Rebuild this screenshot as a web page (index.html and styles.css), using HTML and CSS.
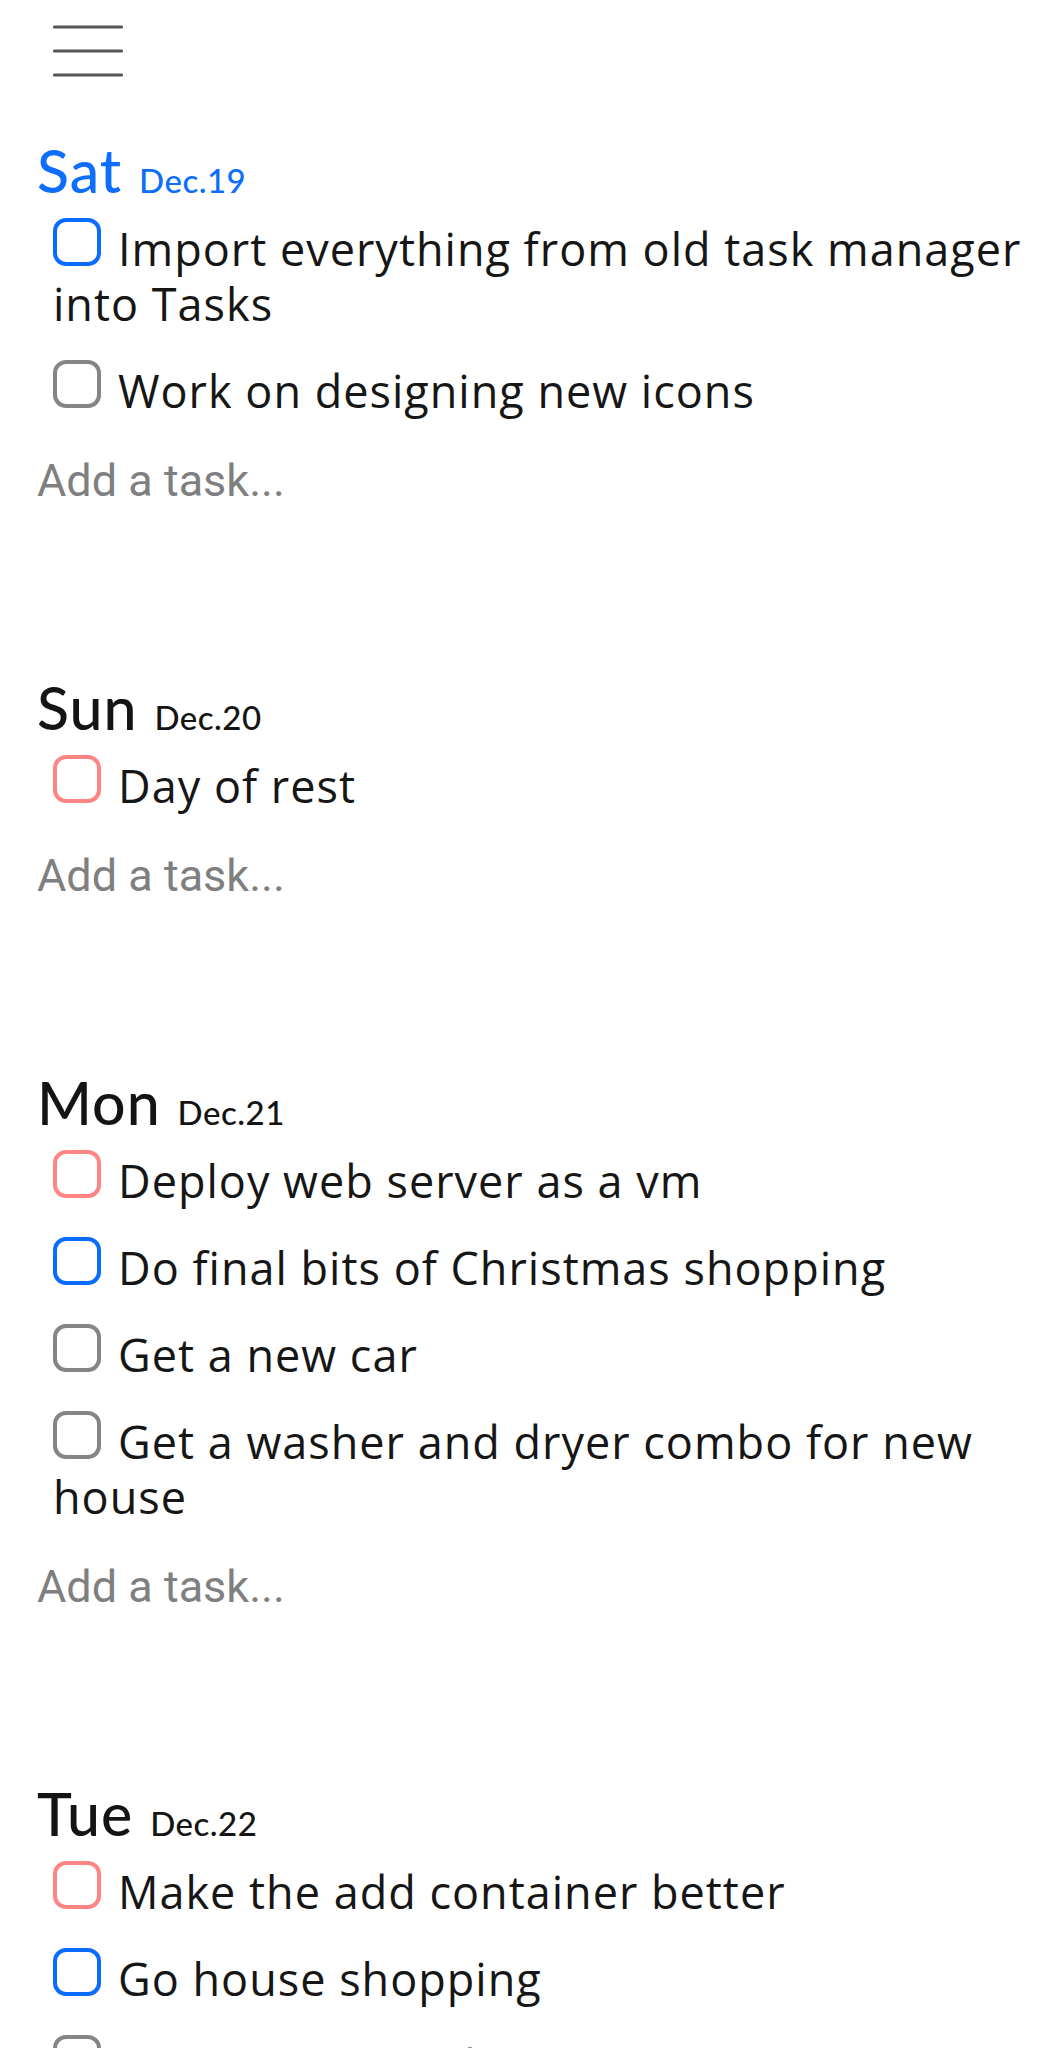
FILE: index.html
```html
<!DOCTYPE html>
<html lang="en">
<head>
<meta charset="utf-8">
<title>Tasks</title>
<link rel="stylesheet" href="styles.css">
</head>
<body>
<header class="topbar">
  <button class="menu-btn" aria-label="Menu">
    <svg width="70" height="54" viewBox="0 0 70 54" class="menu-icon">
      <line x1="1.5" y1="3" x2="68.5" y2="3"/>
      <line x1="1.5" y1="27" x2="68.5" y2="27"/>
      <line x1="1.5" y1="51" x2="68.5" y2="51"/>
    </svg>
  </button>
</header>
<main class="days">
  <section class="day today">
    <h2 class="day-title"><span class="dow">Sat</span> <span class="date">Dec.19</span></h2>
    <ul class="tasks">
      <li class="task"><span class="box box-blue"></span>Import everything from old task manager into Tasks</li>
      <li class="task"><span class="box box-gray"></span>Work on designing new icons</li>
    </ul>
    <div class="add">Add a task...</div>
  </section>
  <section class="day">
    <h2 class="day-title"><span class="dow">Sun</span> <span class="date">Dec.20</span></h2>
    <ul class="tasks">
      <li class="task"><span class="box box-red"></span>Day of rest</li>
    </ul>
    <div class="add">Add a task...</div>
  </section>
  <section class="day">
    <h2 class="day-title"><span class="dow">Mon</span> <span class="date">Dec.21</span></h2>
    <ul class="tasks">
      <li class="task"><span class="box box-red"></span>Deploy web server as a vm</li>
      <li class="task"><span class="box box-blue"></span>Do final bits of Christmas shopping</li>
      <li class="task"><span class="box box-gray"></span>Get a new car</li>
      <li class="task"><span class="box box-gray"></span>Get a washer and dryer combo for new house</li>
    </ul>
    <div class="add">Add a task...</div>
  </section>
  <section class="day">
    <h2 class="day-title"><span class="dow">Tue</span> <span class="date">Dec.22</span></h2>
    <ul class="tasks">
      <li class="task"><span class="box box-red"></span>Make the add container better</li>
      <li class="task"><span class="box box-blue"></span>Go house shopping</li>
      <li class="task"><span class="box box-gray"></span>Clean up the old kitchen</li>
    </ul>
    <div class="add">Add a task...</div>
  </section>
</main>
</body>
</html>
```
FILE: styles.css
```css
html, body {
  margin: 0;
  padding: 0;
  background: #ffffff;
}
body {
  font-family: "Open Sans", "Noto Sans", sans-serif;
  color: #161616;
}
.topbar {
  padding: 24px 0 0 53px;
  height: 139px;
  box-sizing: border-box;
}
.menu-btn {
  border: 0;
  background: none;
  padding: 0;
  margin: 0;
  display: block;
}
.menu-icon {
  display: block;
  stroke: #555555;
  stroke-width: 3.2;
  stroke-linecap: round;
}
.days {
  padding: 0 8px 0 37px;
}
.day {
  margin-bottom: 168px;
}
.day-title {
  margin: 0;
  font-family: "Lato", sans-serif;
  font-weight: 500;
  font-size: 59px;
  line-height: 64px;
  color: #141414;
}
.day-title .dow {
  letter-spacing: 1px;
}
.day-title .date {
  font-size: 33px;
  letter-spacing: 0.5px;
  margin-left: 2px;
}
.today .day-title {
  color: #0d6efd;
}
.tasks {
  list-style: none;
  margin: 9px 0 0 0;
  padding: 0 0 0 16px;
  display: flex;
  flex-direction: column;
  gap: 32px;
}
.task {
  font-size: 45px;
  line-height: 55px;
  letter-spacing: 1px;
}
.box {
  display: inline-block;
  width: 48px;
  height: 48px;
  box-sizing: border-box;
  border: 4.5px solid #858585;
  border-radius: 13px;
  margin: -12px 17px 0 0;
}
.box-blue { border-color: #0a6cff; }
.box-red { border-color: #ff8585; }
.box-gray { border-color: #858585; }
.add {
  margin-top: 36px;
  font-family: "Roboto", sans-serif;
  font-size: 45px;
  line-height: 54px;
  color: #7f7f7f;
}
```
